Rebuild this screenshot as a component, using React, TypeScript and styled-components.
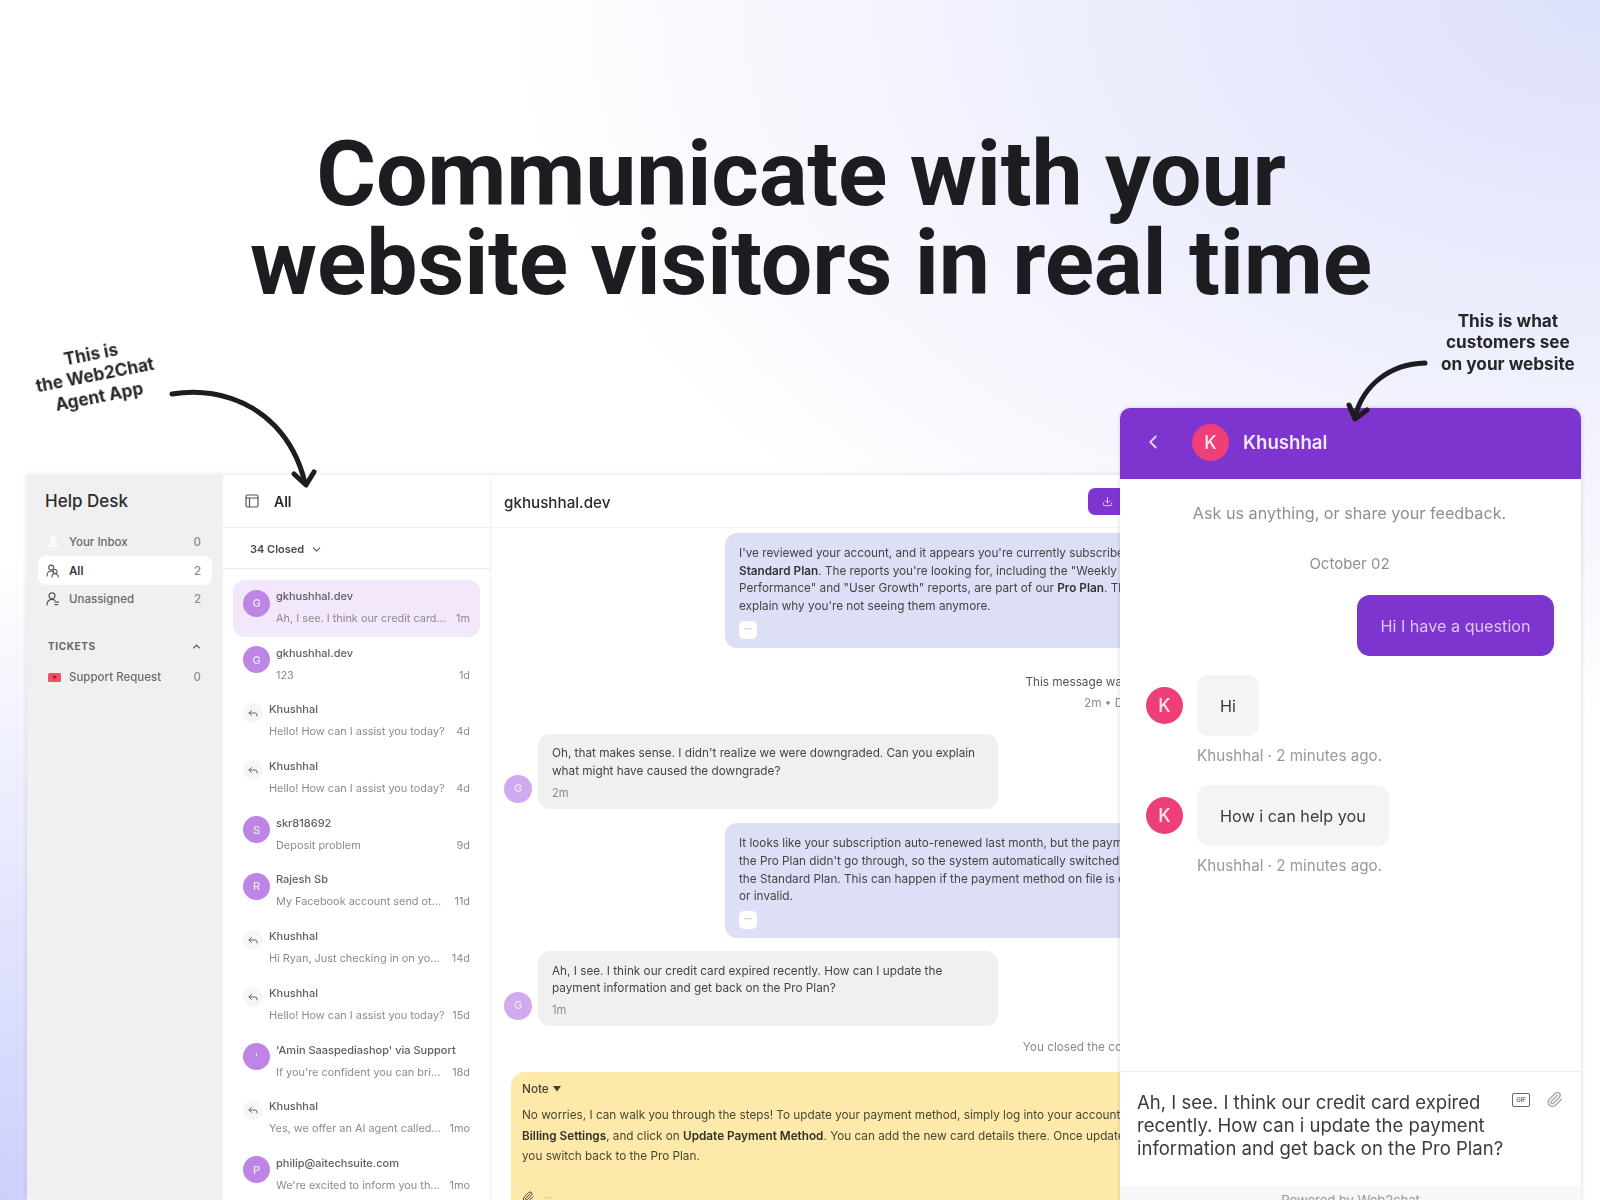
import React from "react";
import styled, { createGlobalStyle } from "styled-components";
import { ChevronDown, ChevronUp, ChevronLeft, Download, Paperclip, Reply, UserRound } from "lucide-react";

const Global = createGlobalStyle`
  html, body { margin: 0; padding: 0; }
  body { font-family: Inter, "Liberation Sans", sans-serif; background: #fff; }
  * { box-sizing: border-box; }
`;

const Page = styled.div`
  position: relative;
  width: 1600px;
  height: 1200px;
  overflow: hidden;
  display: flex;
  flex-direction: column;
  background:
    radial-gradient(ellipse 1100px 720px at 100% 0, #dde0fb 0, rgba(221,224,251,0) 100%),
    radial-gradient(ellipse 620px 640px at 0 100%, #ccd0fc 0, rgba(204,208,252,0) 100%),
    #fff;
`;
const Heading = styled.h1`
  margin: 0;
  padding: 128.5px 0 0 22px;
  height: 475px;
  flex: none;
  text-align: center;
  font: 700 91.4px/89.5px Roboto, sans-serif;
  color: #1d1d21;
  letter-spacing: -0.2px;
  filter: blur(0.35px);
`;
const HeadLine = styled.span<{ $inset?: number }>`
  display: block;
  padding-right: ${p => p.$inset ?? 0}px;
`;
const AgentApp = styled.div`
  flex: 1;
  margin-left: 27px;
  width: 1193px;
  display: flex;
  background: #fff;
  box-shadow: 0 0 5px rgba(60,60,70,.16);
  filter: blur(0.6px);
  overflow: hidden;
`;
const Sidebar = styled.aside`
  flex: none;
  width: 196px;
  background: #f0f0f0;
  padding: 14px 11px 0;
`;
const SideTitle = styled.div`
  font-size: 17px;
  line-height: 24px;
  font-weight: 500;
  color: #2c2c2c;
  padding-left: 7px;
  margin-bottom: 14.5px;
`;
const NavItem = styled.div<{ $active?: boolean }>`
  height: 28.7px;
  display: flex;
  align-items: center;
  gap: 9px;
  padding: 0 11px 0 8px;
  border-radius: 8px;
  font-size: 11.5px;
  font-weight: ${p => (p.$active ? 600 : 500)};
  color: ${p => (p.$active ? "#3a3a3a" : "#6a6a6a")};
  background: ${p => (p.$active ? "#fff" : "transparent")};
  svg { flex: none; }
`;
const NavLabel = styled.span`flex: 1;`;
const NavCount = styled.span`color: #8a8a8a; font-weight: 500;`;
const SectionHead = styled.div`
  margin-top: 22.5px;
  height: 20px;
  display: flex;
  align-items: center;
  justify-content: space-between;
  padding: 0 10px 0 10px;
  font-size: 10px;
  font-weight: 700;
  letter-spacing: .6px;
  color: #666;
`;
const TicketItem = styled(NavItem)`
  margin-top: 7px;
  padding-left: 10px;
  gap: 8px;
`;

const ListCol = styled.section`
  flex: none;
  width: 268px;
  border-right: 1px solid #f2f2f4;
  display: flex;
  flex-direction: column;
`;
const ListHeader = styled.div`
  height: 53px;
  flex: none;
  display: flex;
  align-items: center;
  gap: 15px;
  padding-left: 22px;
  border-bottom: 1px solid #efeff2;
  font-size: 14px;
  font-weight: 600;
  color: #2a2a2a;
`;
const Filter = styled.div`
  height: 41px;
  flex: none;
  display: flex;
  align-items: center;
  gap: 6px;
  padding: 2px 0 0 27px;
  border-bottom: 1px solid #e9e9ee;
  font-size: 11px;
  font-weight: 600;
  color: #4a4a4a;
`;
const Rows = styled.div`
  padding: 11px 10px 0;
  display: grid;
  grid-auto-rows: 56.7px;
`;
const Row = styled.div<{ $active?: boolean }>`
  display: flex;
  align-items: flex-start;
  padding: 7px 10px 0;
  border-radius: 12px;
  background: ${p => (p.$active ? "#f3e7fb" : "transparent")};
`;
const Avatar = styled.div`
  flex: none;
  width: 27px;
  height: 27px;
  margin-top: 2.5px;
  margin-right: 6px;
  border-radius: 50%;
  background: #bc85e6;
  color: #f3e7fb;
  font-size: 11px;
  font-weight: 500;
  display: flex;
  align-items: center;
  justify-content: center;
`;
const ReplyBadge = styled.div`
  flex: none;
  width: 20px;
  height: 20px;
  margin-top: 3px;
  margin-right: 6px;
  border-radius: 50%;
  background: #f6f6f6;
  color: #666;
  display: flex;
  align-items: center;
  justify-content: center;
`;
const RowBody = styled.div`
  flex: 1;
  min-width: 0;
`;
const RowName = styled.div`
  height: 18px;
  font-size: 11px;
  line-height: 18px;
  font-weight: 500;
  color: #5e5e5e;
  white-space: nowrap;
`;
const RowLine = styled.div`
  margin-top: 4px;
  height: 18px;
  line-height: 18px;
  font-size: 10.9px;
  color: #8b8b8b;
  display: flex;
  justify-content: space-between;
  white-space: nowrap;
`;

const Main = styled.main`
  flex: 1;
  min-width: 0;
  display: flex;
  flex-direction: column;
  overflow: hidden;
`;
const MainHeader = styled.div`
  flex: none;
  height: 53px;
  display: flex;
  align-items: center;
  justify-content: space-between;
  padding: 0 0 0 13px;
  border-bottom: 1px solid #f2f2f4;
  font-size: 15.2px;
  font-weight: 500;
  color: #2a2a2a;
`;
const MainTitle = styled.span`
  margin-top: 3px;
`;
const ExportButton = styled.div`
  width: 132px;
  height: 27px;
  border-radius: 7px;
  background: #7e34cf;
  color: #e8d8f8;
  display: flex;
  align-items: center;
  padding-left: 14px;
`;
const Thread = styled.div`
  display: flex;
  flex-direction: column;
  padding: 5px 15px 0 13px;
  font-size: 11.75px;
  line-height: 17.7px;
  color: #444;
`;
const OutBubble = styled.div<{ $gap?: number }>`
  align-self: flex-end;
  width: 480px;
  margin-top: ${p => p.$gap ?? 0}px;
  padding: 12px 14px 0;
  border-radius: 12px;
  background: #dcdff6;
  white-space: nowrap;
  overflow: hidden;
  b { font-weight: 600; color: #333; }
`;
const Dots = styled.div`
  width: 18px;
  height: 18px;
  margin: 5px 0 9px;
  border-radius: 5px;
  background: #fff;
  color: #999;
  font-size: 10px;
  line-height: 14px;
  text-align: center;
`;
const System = styled.div<{ $gap?: number; $muted?: boolean }>`
  align-self: flex-end;
  margin-top: ${p => p.$gap ?? 0}px;
  line-height: 18px;
  text-align: right;
  color: ${p => (p.$muted ? "#8a8a8a" : "#555")};
  white-space: nowrap;
`;
const InRow = styled.div<{ $gap: number }>`
  display: flex;
  align-items: flex-end;
  gap: 6px;
  margin-top: ${p => p.$gap}px;
`;
const InAvatar = styled.div`
  flex: none;
  width: 28px;
  height: 28px;
  margin-bottom: 6px;
  border-radius: 50%;
  background: #cfaaef;
  color: #f0e5fa;
  font-size: 11px;
  font-weight: 500;
  display: flex;
  align-items: center;
  justify-content: center;
`;
const InBubble = styled.div`
  width: 460px;
  padding: 11.5px 14px 7px;
  border-radius: 12px;
  background: #f0f0f0;
  white-space: nowrap;
`;
const Stamp = styled.div`
  margin-top: 3px;
  line-height: 18px;
  font-size: 11.2px;
  color: #8b8b8b;
`;
const Note = styled.div`
  margin: 15.5px 0 0 7px;
  width: 800px;
  height: 200px;
  padding: 8.5px 11px;
  border-radius: 14px 14px 0 0;
  background: #fde9a9;
  color: #4a4636;
  white-space: nowrap;
  line-height: 20.2px;
  b { font-weight: 600; color: #33302a; }
`;
const NoteHead = styled.div`
  display: flex;
  align-items: center;
  gap: 4px;
  line-height: 18px;
  margin-bottom: 7px;
  font-weight: 500;
  color: #443f30;
`;
const NoteTools = styled.div`
  margin-top: 21px;
  display: flex;
  align-items: center;
  gap: 9px;
  color: #4a4636;
`;
const NoteDots = styled.span`
  color: #b7a877;
  font-size: 10px;
`;

const Widget = styled.div`
  position: absolute;
  left: 1120px;
  top: 408px;
  width: 461px;
  height: 808px;
  display: flex;
  flex-direction: column;
  background: #fff;
  border-radius: 10px 10px 0 0;
  overflow: hidden;
  box-shadow: 0 0 4px rgba(70,60,90,.22);
  filter: blur(0.45px);
`;
const WidgetHeader = styled.div`
  flex: none;
  height: 71px;
  display: flex;
  align-items: center;
  background: #7e34cf;
  color: #f1e8fb;
  padding: 0 0 3px 22px;
  font-size: 18.6px;
  font-weight: 600;
`;
const WidgetAvatar = styled.div<{ $gap?: number }>`
  flex: none;
  width: 37px;
  height: 37px;
  margin: 0 ${p => p.$gap ?? 14}px 0 0;
  border-radius: 50%;
  background: #ee3f77;
  color: #fbe6ee;
  font-size: 18px;
  font-weight: 500;
  display: flex;
  align-items: center;
  justify-content: center;
`;
const BackWrap = styled.div`
  width: 50px;
  display: flex;
`;
const WidgetBody = styled.div`
  flex: 1;
  padding: 24px 27px 0 26px;
  display: flex;
  flex-direction: column;
`;
const Centered = styled.div<{ $gap?: number; $small?: boolean }>`
  margin-top: ${p => p.$gap ?? 0}px;
  line-height: 20px;
  font-size: ${p => (p.$small ? 15 : 16.2)}px;
  color: #8f8f8f;
  text-align: center;
  margin-right: 1px;
`;
const WOut = styled.div`
  align-self: flex-end;
  margin-top: 21px;
  width: 197px;
  height: 61px;
  border-radius: 13px;
  background: #7e34cf;
  color: #dcc6f3;
  font-size: 16.2px;
  display: flex;
  align-items: center;
  justify-content: center;
`;
const WRow = styled.div<{ $gap: number }>`
  margin-top: ${p => p.$gap}px;
  display: flex;
  align-items: center;
  gap: 0;
`;
const WIn = styled.div`
  margin-left: 14px;
  height: 61px;
  padding: 0 23px;
  border-radius: 12px;
  background: #f4f4f4;
  color: #3a3a3a;
  font-size: 16.2px;
  display: flex;
  align-items: center;
`;
const WMeta = styled.div`
  margin: 10px 0 0 51px;
  line-height: 20px;
  font-size: 15.2px;
  color: #999;
`;
const Composer = styled.div`
  flex: none;
  height: 115px;
  display: flex;
  justify-content: space-between;
  padding: 19px 18px 0 17px;
  border-top: 1px solid #eee;
  font-size: 18.55px;
  line-height: 23px;
  color: #3c3c3c;
`;
const ComposerTools = styled.div`
  display: flex;
  gap: 16px;
  color: #aaa;
`;
const GifBox = styled.div`
  width: 18px;
  height: 14px;
  margin-top: 2px;
  border: 1.5px solid #666;
  border-radius: 2px;
  color: #777;
  font-size: 6px;
  font-weight: 700;
  line-height: 11px;
  text-align: center;
`;
const Footer = styled.div`
  flex: none;
  height: 30px;
  padding-top: 6px;
  background: #f7f7f7;
  text-align: center;
  font-size: 13px;
  line-height: 16px;
  color: #999;
`;

const Callout = styled.div<{ $x: number; $y: number; $r?: number }>`
  position: absolute;
  left: ${p => p.$x}px;
  top: ${p => p.$y}px;
  transform: rotate(${p => p.$r ?? 0}deg);
  text-align: center;
  font-size: 17.2px;
  line-height: 21.3px;
  font-weight: 680;
  color: #26262b;
  white-space: nowrap;
  filter: blur(0.3px);
`;
const ArrowLayer = styled.svg`
  position: absolute;
  inset: 0;
  width: 1600px;
  height: 1200px;
  pointer-events: none;
`;

type RowData = { name: string; text: string; time: string; initial?: string; active?: boolean };
const rows: RowData[] = [
  { name: "gkhushhal.dev", text: "Ah, I see. I think our credit card...", time: "1m", initial: "G", active: true },
  { name: "gkhushhal.dev", text: "123", time: "1d", initial: "G" },
  { name: "Khushhal", text: "Hello! How can I assist you today?", time: "4d" },
  { name: "Khushhal", text: "Hello! How can I assist you today?", time: "4d" },
  { name: "skr818692", text: "Deposit problem", time: "9d", initial: "S" },
  { name: "Rajesh Sb", text: "My Facebook account send ot...", time: "11d", initial: "R" },
  { name: "Khushhal", text: "Hi Ryan, Just checking in on yo...", time: "14d" },
  { name: "Khushhal", text: "Hello! How can I assist you today?", time: "15d" },
  { name: "'Amin Saaspediashop' via Support", text: "If you're confident you can bri...", time: "18d", initial: "'" },
  { name: "Khushhal", text: "Yes, we offer an AI agent called...", time: "1mo" },
  { name: "philip@aitechsuite.com", text: "We're excited to inform you th...", time: "1mo", initial: "P" },
];

const PanelIcon = () => (
  <svg width="14" height="14" viewBox="0 0 14 14" fill="none" stroke="#555" strokeWidth="1.2">
    <rect x="1" y="1" width="12" height="12" rx="1.5" />
    <path d="M1 4h12M4.5 4v9" />
  </svg>
);
const TicketIcon = () => (
  <svg width="13" height="9" viewBox="0 0 13 9">
    <rect width="13" height="9" rx="1.5" fill="#ee5068" />
    <path d="M6.5 6.3 4.6 4.2a1.1 1.1 0 0 1 1.9-1.1 1.1 1.1 0 0 1 1.9 1.1Z" fill="#a92035" />
  </svg>
);
const AllIcon = () => (
  <svg width="14" height="14" viewBox="0 0 14 14" fill="none" stroke="#555" strokeWidth="1.1" strokeLinecap="round">
    <circle cx="5.2" cy="3.6" r="2.5" />
    <path d="M1 12c.1-3 1.7-5 4.2-5 .8 0 1.5.2 2 .6" />
    <circle cx="9" cy="7.5" r="2" />
    <path d="M5.8 13c.2-2 1.5-3.2 3.2-3.2s3 1.2 3.2 3.2" />
  </svg>
);
const UnassignedIcon = () => (
  <svg width="14" height="14" viewBox="0 0 14 14" fill="none" stroke="#555" strokeWidth="1.2" strokeLinecap="round">
    <circle cx="6" cy="3.8" r="3" />
    <path d="M1 13c.1-3.4 2-5.6 5-5.6 1.200 0 2.200.4 3 1" />
    <path d="M9 10.200h3.600M9 12.600h2.800" />
  </svg>
);

export default function App() {
  return (
    <Page>
      <Global />
      <Heading>
        <HeadLine $inset={20}>Communicate with your</HeadLine>
        <HeadLine>website visitors in real time</HeadLine>
      </Heading>
      <AgentApp>
        <Sidebar>
          <SideTitle>Help Desk</SideTitle>
          <NavItem>
            <UserRound size={14} color="#fafafa" fill="#fafafa" />
            <NavLabel>Your Inbox</NavLabel>
            <NavCount>0</NavCount>
          </NavItem>
          <NavItem $active>
            <AllIcon />
            <NavLabel>All</NavLabel>
            <NavCount>2</NavCount>
          </NavItem>
          <NavItem>
            <UnassignedIcon />
            <NavLabel>Unassigned</NavLabel>
            <NavCount>2</NavCount>
          </NavItem>
          <SectionHead>
            TICKETS
            <ChevronUp size={11} strokeWidth={3} color="#555" />
          </SectionHead>
          <TicketItem>
            <TicketIcon />
            <NavLabel>Support Request</NavLabel>
            <NavCount>0</NavCount>
          </TicketItem>
        </Sidebar>
        <ListCol>
          <ListHeader>
            <PanelIcon />
            All
          </ListHeader>
          <Filter>
            34 Closed
            <ChevronDown size={13} color="#555" />
          </Filter>
          <Rows>
            {rows.map((r, i) => (
              <Row key={i} $active={r.active}>
                {r.initial ? (
                  <Avatar>{r.initial}</Avatar>
                ) : (
                  <ReplyBadge>
                    <Reply size={12} />
                  </ReplyBadge>
                )}
                <RowBody>
                  <RowName>{r.name}</RowName>
                  <RowLine>
                    <span>{r.text}</span>
                    <span>{r.time}</span>
                  </RowLine>
                </RowBody>
              </Row>
            ))}
          </Rows>
        </ListCol>
        <Main>
          <MainHeader>
            <MainTitle>gkhushhal.dev</MainTitle>
            <ExportButton>
              <Download size={11} />
            </ExportButton>
          </MainHeader>
          <Thread>
            <OutBubble>
              I've reviewed your account, and it appears you're currently subscribed to the
              <br />
              <b>Standard Plan</b>. The reports you're looking for, including the "Weekly
              <br />
              Performance" and "User Growth" reports, are part of our <b>Pro Plan</b>. This would
              <br />
              explain why you're not seeing them anymore.
              <Dots>···</Dots>
            </OutBubble>
            <System $gap={25.6}>This message was sent by email</System>
            <System $gap={2.4} $muted>2m • Delivered to you</System>
            <InRow $gap={22}>
              <InAvatar>G</InAvatar>
              <InBubble>
                Oh, that makes sense. I didn't realize we were downgraded. Can you explain
                <br />
                what might have caused the downgrade?
                <Stamp>2m</Stamp>
              </InBubble>
            </InRow>
            <OutBubble $gap={14.5}>
              It looks like your subscription auto-renewed last month, but the payment for
              <br />
              the Pro Plan didn't go through, so the system automatically switched you to
              <br />
              the Standard Plan. This can happen if the payment method on file is expired
              <br />
              or invalid.
              <Dots>···</Dots>
            </OutBubble>
            <InRow $gap={13}>
              <InAvatar>G</InAvatar>
              <InBubble>
                Ah, I see. I think our credit card expired recently. How can I update the
                <br />
                payment information and get back on the Pro Plan?
                <Stamp>1m</Stamp>
              </InBubble>
            </InRow>
            <System $gap={12.5} $muted>You closed the conversation · 1m</System>
            <Note>
              <NoteHead>
                Note
                <svg width="8" height="6" viewBox="0 0 8 6"><path d="M0 0h8L4 5.5Z" fill="#443f30" /></svg>
              </NoteHead>
              No worries, I can walk you through the steps! To update your payment method, simply log into your account, go to
              <br />
              <b>Billing Settings</b>, and click on <b>Update Payment Method</b>. You can add the new card details there. Once updated, let me know
              <br />
              you switch back to the Pro Plan.
              <NoteTools>
                <Paperclip size={12} />
                <NoteDots>···</NoteDots>
              </NoteTools>
            </Note>
          </Thread>
        </Main>
      </AgentApp>

      <Widget>
        <WidgetHeader>
          <BackWrap>
            <ChevronLeft size={22} strokeWidth={2} color="#e6d6f7" />
          </BackWrap>
          <WidgetAvatar>K</WidgetAvatar>
          Khushhal
        </WidgetHeader>
        <WidgetBody>
          <Centered>Ask us anything, or share your feedback.</Centered>
          <Centered $gap={31} $small>October 02</Centered>
          <WOut>Hi I have a question</WOut>
          <WRow $gap={19}>
            <WidgetAvatar $gap={0}>K</WidgetAvatar>
            <WIn>Hi</WIn>
          </WRow>
          <WMeta>Khushhal · 2 minutes ago.</WMeta>
          <WRow $gap={19}>
            <WidgetAvatar $gap={0}>K</WidgetAvatar>
            <WIn>How i can help you</WIn>
          </WRow>
          <WMeta>Khushhal · 2 minutes ago.</WMeta>
        </WidgetBody>
        <Composer>
          <div>
            Ah, I see. I think our credit card expired
            <br />
            recently. How can i update the payment
            <br />
            information and get back on the Pro Plan?
          </div>
          <ComposerTools>
            <GifBox>GIF</GifBox>
            <Paperclip size={17} />
          </ComposerTools>
        </Composer>
        <Footer>Powered by Web2chat</Footer>
      </Widget>

      <Callout $x={35} $y={343} $r={-11}>
        This is
        <br />
        the Web2Chat
        <br />
        Agent App
      </Callout>
      <Callout $x={1441} $y={310}>
        This is what
        <br />
        customers see
        <br />
        on your website
      </Callout>

      <ArrowLayer viewBox="0 0 1600 1200" fill="none" stroke="#1d1d21" strokeLinecap="round" strokeLinejoin="round">
        <path d="M172 394C215 387 252 402 275 426C293 445 301 466 305 483" strokeWidth="5" />
        <path d="M294 474 306 485 314 472" strokeWidth="5" />
        <path d="M1425 363C1390 364 1363 385 1355 417" strokeWidth="5" />
        <path d="M1349 405 1355 419 1367 410" strokeWidth="5" />
      </ArrowLayer>
    </Page>
  );
}
